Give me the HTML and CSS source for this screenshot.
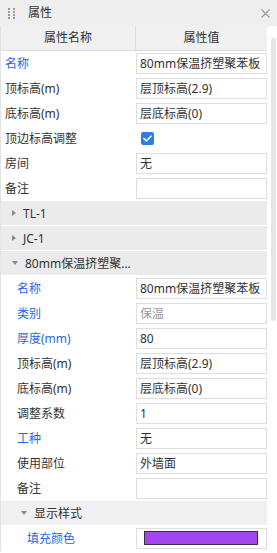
FILE: index.html
```html
<!DOCTYPE html>
<html lang="zh">
<head>
<meta charset="utf-8">
<title>属性</title>
<link rel="stylesheet" href="styles.css">
</head>
<body>
<div class="panel">
  <div class="titlebar">
    <span class="grip"><i></i><i></i><i></i><i></i><i></i><i></i><i></i><i></i></span>
    <span class="title">属性</span>
    <svg class="close" width="9" height="9" viewBox="0 0 9 9"><path d="M0.5 0.5L8.5 8.5M8.5 0.5L0.5 8.5" stroke="#9a9a9a" stroke-width="1.1" fill="none"/></svg>
  </div>
  <div class="content">
    <div class="grid">
      <div class="header"><div class="hcell">属性名称</div><div class="hcell">属性值</div></div>

      <div class="row"><div class="label blue">名称</div><div class="val"><div class="box">80mm保温挤塑聚苯板</div></div></div>
      <div class="row"><div class="label">顶标高(m)</div><div class="val"><div class="box">层顶标高(2.9)</div></div></div>
      <div class="row"><div class="label">底标高(m)</div><div class="val"><div class="box">层底标高(0)</div></div></div>
      <div class="row"><div class="label">顶边标高调整</div><div class="val"><span class="check"><svg width="13" height="13" viewBox="0 0 13 13"><path d="M3 6.6L5.4 9L10 4.2" stroke="#fff" stroke-width="1.6" fill="none" stroke-linecap="round" stroke-linejoin="round"/></svg></span></div></div>
      <div class="row"><div class="label">房间</div><div class="val"><div class="box">无</div></div></div>
      <div class="row"><div class="label">备注</div><div class="val"><div class="box"></div></div></div>

      <div class="group"><span class="tri right"></span><span>TL-1</span></div>
      <div class="group"><span class="tri right"></span><span>JC-1</span></div>
      <div class="group"><span class="tri down"></span><span>80mm保温挤塑聚...</span></div>

      <div class="row"><div class="label l2 blue">名称</div><div class="val"><div class="box">80mm保温挤塑聚苯板</div></div></div>
      <div class="row"><div class="label l2 blue">类别</div><div class="val"><div class="box muted">保温</div></div></div>
      <div class="row"><div class="label l2 blue">厚度(mm)</div><div class="val"><div class="box">80</div></div></div>
      <div class="row"><div class="label l2">顶标高(m)</div><div class="val"><div class="box">层顶标高(2.9)</div></div></div>
      <div class="row"><div class="label l2">底标高(m)</div><div class="val"><div class="box">层底标高(0)</div></div></div>
      <div class="row"><div class="label l2">调整系数</div><div class="val"><div class="box">1</div></div></div>
      <div class="row"><div class="label l2 blue">工种</div><div class="val"><div class="box">无</div></div></div>
      <div class="row"><div class="label l2">使用部位</div><div class="val"><div class="box">外墙面</div></div></div>
      <div class="row"><div class="label l2">备注</div><div class="val"><div class="box"></div></div></div>

      <div class="subgroup"><span class="tri down"></span><span>显示样式</span></div>
      <div class="row"><div class="label l3 blue">填充颜色</div><div class="val"><div class="box swatchbox"><span class="swatch"></span></div></div></div>
    </div>
    <div class="scrollbar"><div class="thumb"></div></div>
  </div>
</div>
</body>
</html>
```

FILE: styles.css
```css
html, body {
  margin: 0;
  padding: 0;
  background: #ffffff;
}
body {
  font-family: "Noto Sans", "Noto Sans CJK SC", sans-serif;
  font-size: 12px;
  color: #333333;
  width: 277px;
  height: 553px;
  overflow: hidden;
}
.panel {
  width: 277px;
  display: flex;
  flex-direction: column;
}
.titlebar {
  height: 26px;
  background: #eeeeee;
  display: flex;
  align-items: center;
  padding-left: 8px;
  padding-right: 7px;
}
.grip {
  display: grid;
  grid-template-columns: 2px 2px;
  column-gap: 3px;
  row-gap: 1px;
  width: 7px;
}
.grip i {
  display: block;
  width: 2px;
  height: 2px;
  background: #9a9a9a;
}
.title {
  margin-left: 13px;
  font-size: 12px;
  color: #333;
  line-height: 26px;
  flex: 1;
}
.close {
  display: block;
}
.content {
  display: flex;
  align-items: flex-start;
}
.grid {
  width: 267px;
  border-left: 1px solid #e2e2e2;
  box-sizing: border-box;
}
.header {
  display: grid;
  grid-template-columns: 135px 131px;
  height: 24px;
  background: #f0f0f0;
  border-bottom: 1px solid #dcdcdc;
}
.hcell {
  text-align: center;
  line-height: 24px;
  color: #333;
}
.hcell:first-child {
  border-right: 1px solid #dcdcdc;
}
.row {
  display: grid;
  grid-template-columns: 135px 131px;
  height: 25px;
  align-items: center;
}
.label {
  padding-left: 4px;
  line-height: 25px;
  white-space: nowrap;
}
.label.l2 { padding-left: 16px; }
.label.l3 { padding-left: 26px; }
.blue { color: #2b64e6; }
.box {
  box-sizing: border-box;
  height: 21px;
  border: 1px solid #dedede;
  padding-left: 3px;
  line-height: 19px;
  white-space: nowrap;
  overflow: hidden;
}
.box.muted { color: #9a9a9a; }
.check {
  display: block;
  width: 13px;
  height: 13px;
  margin-left: 5px;
  border-radius: 2px;
  background: #2f7fe3;
}
.check svg { display: block; }
.group {
  height: 24px;
  border-bottom: 1px solid #ffffff;
  background: #ebebeb;
  display: flex;
  align-items: center;
  font-size: 12px;
  padding-left: 11px;
  gap: 7px;
}
.subgroup {
  height: 24px;
  border-bottom: 1px solid #ffffff;
  background: #f0f0f2;
  display: flex;
  align-items: center;
  font-size: 12px;
  padding-left: 20px;
  gap: 7px;
}
.tri {
  display: block;
  width: 0;
  height: 0;
}
.tri.right {
  border-top: 3px solid transparent;
  border-bottom: 3px solid transparent;
  border-left: 4px solid #8a8a8a;
}
.tri.down {
  border-left: 3px solid transparent;
  border-right: 3px solid transparent;
  border-top: 4px solid #8a8a8a;
}
.swatchbox {
  padding: 2px 0 0 7px;
}
.swatch {
  display: block;
  width: 114px;
  height: 14px;
  box-sizing: border-box;
  border: 1px solid #333333;
  background: #a346f2;
}
.scrollbar {
  width: 5px;
  margin-left: 4px;
  padding-top: 12px;
  height: 527px;
  box-sizing: border-box;
}
.thumb {
  width: 5px;
  height: 283px;
  background: #e6e6e6;
  border-radius: 2px;
}
```
